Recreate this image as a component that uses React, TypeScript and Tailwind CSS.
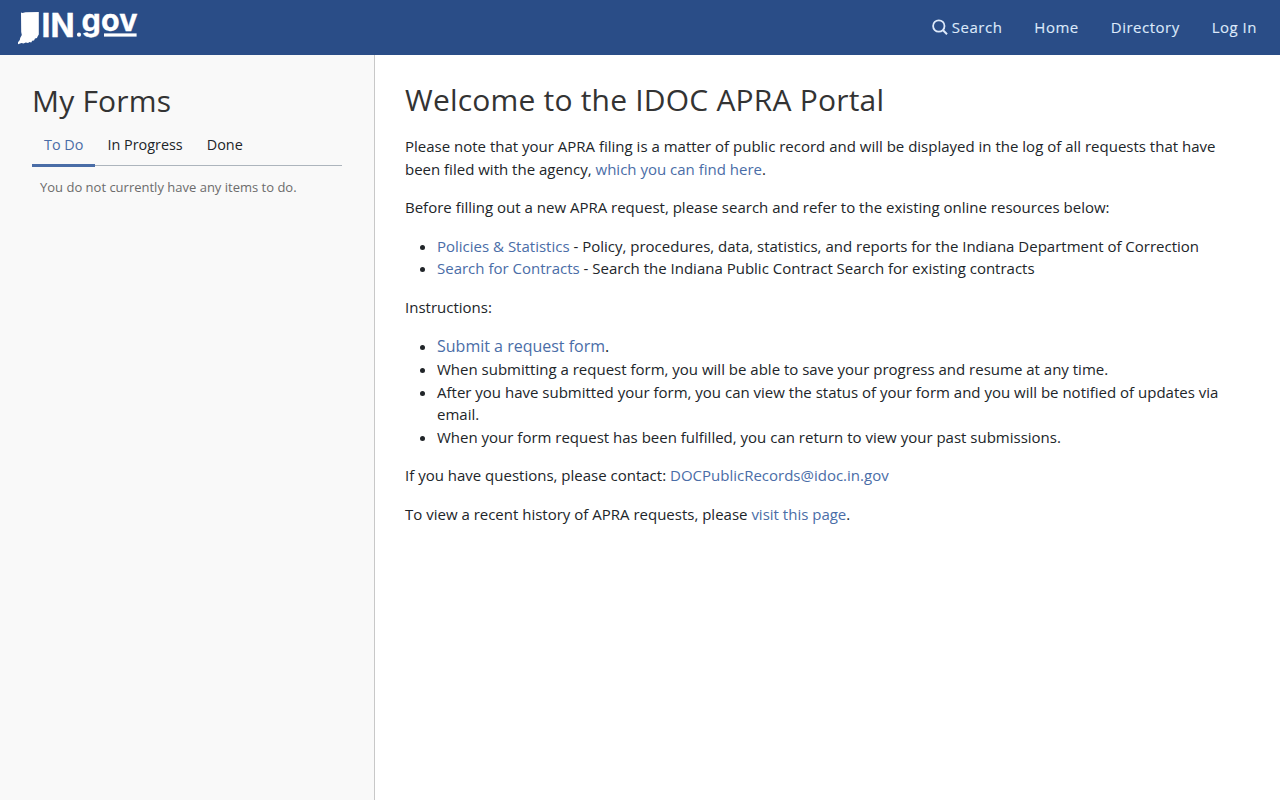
import { useState } from "react";

const navItems = ["Home", "Directory", "Log In"];

const tabs = ["To Do", "In Progress", "Done"];

const Logo = () => (
  <svg
    className="block"
    width="124"
    height="55"
    viewBox="0 0 124 55"
    fill="#fff"
    fontFamily="Inter, sans-serif"
    fontWeight="700"
    aria-label="IN.gov"
  >
    <path d="M5 12.6L6.5 13L9.5 12.2L22.8 12V34.5L21.6 36.5L21 38L19 38.6L18 40.5L16.2 40.8L15.2 42.4L13.5 42L12 43L9.8 42.4L7.5 43.6L5.5 43L2 44.3L2 42.2L3.8 40L4.2 38L5.8 35L5.2 32Z" />
    <text
      x="25.5"
      y="36.6"
      fontSize="32"
      textLength="33"
      lengthAdjust="spacingAndGlyphs"
      stroke="#fff"
      strokeWidth="0.4"
    >
      IN
    </text>
    <circle cx="63" cy="34.7" r="2.1" />
    <text
      x="65.5"
      y="31.2"
      fontSize="30.5"
      textLength="56"
      lengthAdjust="spacing"
      stroke="#fff"
      strokeWidth="0.3"
    >
      gov
    </text>
    <rect x="88" y="33.4" width="32.6" height="3.2" />
  </svg>
);

const SearchIcon = () => (
  <svg
    className="-mt-0.5"
    width="16"
    height="16"
    viewBox="0 0 16 16"
    fill="none"
    stroke="currentColor"
    strokeWidth="1.8"
  >
    <circle cx="6.8" cy="7" r="5.7" />
    <path d="M10.8 11L15 15.2" strokeWidth="2" />
  </svg>
);

const Link = ({ children }: { children: React.ReactNode }) => (
  <a href="#" className="text-[#4a6da7]">
    {children}
  </a>
);

const Header = () => (
  <header className="flex h-[55px] items-center justify-between bg-[#2a4d87] pr-[23px] pl-4">
    <a href="#">
      <Logo />
    </a>
    <nav className="flex gap-8 text-[15px] font-medium tracking-[0.5px] text-[#dde9fa] [-webkit-text-stroke:0.12px]">
      <a href="#" className="flex items-center gap-1">
        <SearchIcon />
        Search
      </a>
      {navItems.map((item) => (
        <a key={item} href="#">
          {item}
        </a>
      ))}
    </nav>
  </header>
);

const Sidebar = () => {
  const [activeTab, setActiveTab] = useState("To Do");

  return (
    <aside className="w-[375px] shrink-0 border-r border-[#c8c8c8] bg-[#f9f9f9] px-8 pt-7">
      <h2 className="text-[30px] leading-9 tracking-[0.2px] text-[#333]">
        My Forms
      </h2>
      <div className="mt-2 flex h-[39px] border-b border-[#adb5bd]">
        {tabs.map((tab) => (
          <button
            key={tab}
            onClick={() => setActiveTab(tab)}
            className={
              tab === activeTab
                ? "h-10 border-b-3 border-[#4a6da7] px-3 pb-0.5 text-[14.4px] text-[#4a6da7]"
                : "h-10 border-b-3 border-transparent px-3 pb-0.5 text-[14.4px] text-[#212529]"
            }
          >
            {tab}
          </button>
        ))}
      </div>
      <p className="mt-[11px] pl-2 text-[13px] leading-5 text-[#6c6c6c]">
        You do not currently have any items to do.
      </p>
    </aside>
  );
};

const Welcome = () => (
  <main className="flex-1 pt-[27px] pr-[50px] pl-[30px] text-[15px] leading-[22.5px] text-[#212529]">
    <h1 className="mb-[17px] text-[30px] leading-9 tracking-[0.2px] text-[#333]">
      Welcome to the IDOC APRA Portal
    </h1>
    <div className="space-y-4">
      <p>
        Please note that your APRA filing is a matter of public record and will
        be displayed in the log of all requests that have been filed with the
        agency, <Link>which you can find here</Link>.
      </p>
      <p>
        Before filling out a new APRA request, please search and refer to the
        existing online resources below:
      </p>
      <ul className="list-disc pl-8">
        <li>
          <Link>Policies &amp; Statistics</Link> - Policy, procedures, data,
          statistics, and reports for the Indiana Department of Correction
        </li>
        <li>
          <Link>Search for Contracts</Link> - Search the Indiana Public Contract
          Search for existing contracts
        </li>
      </ul>
      <p>Instructions:</p>
      <ul className="list-disc pl-8">
        <li>
          <span className="text-base leading-6">
            <Link>Submit a request form</Link>.
          </span>
        </li>
        <li>
          When submitting a request form, you will be able to save your progress
          and resume at any time.
        </li>
        <li>
          After you have submitted your form, you can view the status of your
          form and you will be notified of updates via email.
        </li>
        <li>
          When your form request has been fulfilled, you can return to view your
          past submissions.
        </li>
      </ul>
      <p>
        If you have questions, please contact:{" "}
        <Link>DOCPublicRecords@idoc.in.gov</Link>
      </p>
      <p>
        To view a recent history of APRA requests, please{" "}
        <Link>visit this page</Link>.
      </p>
    </div>
  </main>
);

const App = () => {
  return (
    <div className="flex h-screen flex-col bg-white font-['Open_Sans',sans-serif]">
      <Header />
      <div className="flex flex-1">
        <Sidebar />
        <Welcome />
      </div>
    </div>
  );
};

export default App;
